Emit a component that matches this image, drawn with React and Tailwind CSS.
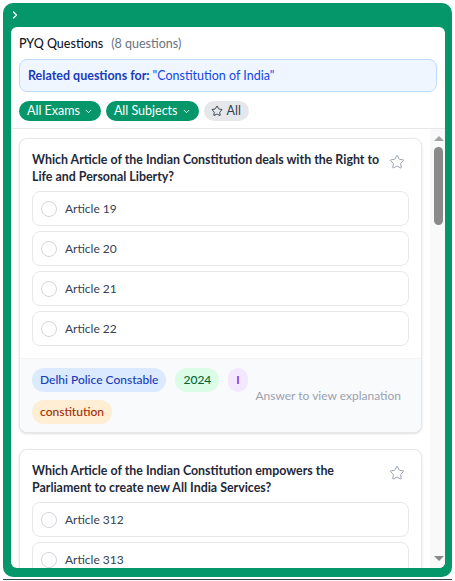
import { ChevronRight, ChevronDown, Star } from 'lucide-react'

const questions = [
  {
    id: 1,
    text: 'Which Article of the Indian Constitution deals with the Right to Life and Personal Liberty?',
    options: ['Article 19', 'Article 20', 'Article 21', 'Article 22'],
    exam: 'Delhi Police Constable',
    year: '2024',
    shift: 'I',
    topic: 'constitution',
  },
  {
    id: 2,
    text: 'Which Article of the Indian Constitution empowers the Parliament to create new All India Services?',
    options: ['Article 312', 'Article 313', 'Article 314', 'Article 315'],
    exam: 'Delhi Police Constable',
    year: '2024',
    shift: 'I',
    topic: 'constitution',
  },
]

function Scrollbar() {
  return (
    <div className="w-[15px] shrink-0 bg-[#f9f9f9] flex flex-col items-center pt-[7px] pb-[7px]">
      <svg width="10" height="5" viewBox="0 0 10 5" className="ml-[2px]">
        <path d="M5 0 L10 5 L0 5 Z" fill="#a3a3a3" />
      </svg>
      <div className="mt-[6px] ml-[2px] w-[9px] h-[78px] rounded-full bg-[#8a8a8a]" />
      <svg width="10" height="5" viewBox="0 0 10 5" className="mt-auto ml-[2px]">
        <path d="M0 0 L10 0 L5 5 Z" fill="#8a8a8a" />
      </svg>
    </div>
  )
}

export default function App() {
  return (
    <div className="h-[581px] w-full bg-white pt-[3px] px-[3px] font-['Segoe_UI','Lato',sans-serif] overflow-hidden">
      {/* Green frame */}
      <div className="h-[574px] bg-[#059669] rounded-[10px] flex flex-col pl-2 pr-[7px] pb-[9px]">
        <div className="h-6 flex items-center -ml-[2px]">
          <ChevronRight size={12} strokeWidth={2.5} className="text-white" />
        </div>

        {/* Panel */}
        <div className="flex-1 min-h-0 bg-white rounded-md flex flex-col overflow-hidden">
          {/* Header */}
          <div className="px-2 pt-2 pb-[7px] border-b border-gray-200">
            <div className="flex items-baseline gap-2 leading-[18px]">
              <span className="text-[12.5px] font-medium text-gray-900">PYQ Questions</span>
              <span className="text-[12.5px] text-gray-500">(8 questions)</span>
            </div>

            <div className="mt-1.5 bg-blue-50 border border-blue-200 rounded-lg px-2 py-2 text-[12.5px] leading-[15px]">
              <span className="font-bold text-blue-800">Related questions for: </span>
              <span className="text-blue-700">"Constitution of India"</span>
            </div>

            <div className="mt-[9px] flex items-center gap-[5px]">
              <button className="h-5 pl-2 pr-2 rounded-full bg-[#059669] text-white text-[12.5px] flex items-center gap-1">
                All Exams <ChevronDown size={9} strokeWidth={2.5} />
              </button>
              <button className="h-5 pl-2 pr-2 rounded-full bg-[#059669] text-white text-[12.5px] flex items-center gap-1">
                All Subjects <ChevronDown size={9} strokeWidth={2.5} />
              </button>
              <button className="h-5 pl-[7px] pr-2 rounded-full bg-gray-200 text-gray-700 text-[12.5px] flex items-center gap-1">
                <Star size={12} /> All
              </button>
            </div>
          </div>

          {/* Scrollable list */}
          <div className="flex-1 min-h-0 flex">
            <div className="flex-1 min-w-0 overflow-hidden px-2 pt-[9px] pb-4 flex flex-col gap-4">
              {questions.map((q) => (
                <div key={q.id} className="shrink-0 bg-white border border-gray-200 rounded-lg shadow-sm overflow-hidden">
                  <div className="p-3">
                    <div className="flex items-start justify-between">
                      <p className="text-[12.4px] leading-[17px] font-bold text-gray-800">{q.text}</p>
                      <button className="p-1 -mt-px shrink-0 text-gray-400">
                        <Star size={16} strokeWidth={1.5} />
                      </button>
                    </div>

                    <div className="mt-1.5 flex flex-col gap-[5px]">
                      {q.options.map((opt) => (
                        <div key={opt} className="h-[35px] px-2 border border-gray-200 rounded-lg flex items-center gap-2">
                          <span className="w-4 h-4 rounded-full border border-gray-300 shrink-0" />
                          <span className="text-xs text-gray-700">{opt}</span>
                        </div>
                      ))}
                    </div>
                  </div>

                  <div className="bg-gray-50 border-t border-gray-100 px-3 pt-[9px] pb-2 flex items-center justify-between gap-1">
                    <div className="flex-1 flex flex-wrap gap-x-[9px] gap-y-2">
                      <span className="h-6 px-2 rounded-full bg-blue-100 text-blue-800 text-xs font-medium flex items-center">{q.exam}</span>
                      <span className="h-6 px-2 rounded-full bg-green-100 text-green-800 text-xs font-medium flex items-center">{q.year}</span>
                      <span className="h-6 px-2 rounded-full bg-purple-100 text-purple-700 text-xs font-medium flex items-center">{q.shift}</span>
                      <span className="h-6 px-2 rounded-full bg-orange-100 text-orange-800 text-xs font-medium flex items-center">{q.topic}</span>
                    </div>
                    <span className="shrink-0 mr-2 text-xs text-gray-400">Answer to view explanation</span>
                  </div>
                </div>
              ))}
            </div>
            <Scrollbar />
          </div>
        </div>
      </div>
      <div className="mt-[2px] h-px bg-gray-700" />
    </div>
  )
}
